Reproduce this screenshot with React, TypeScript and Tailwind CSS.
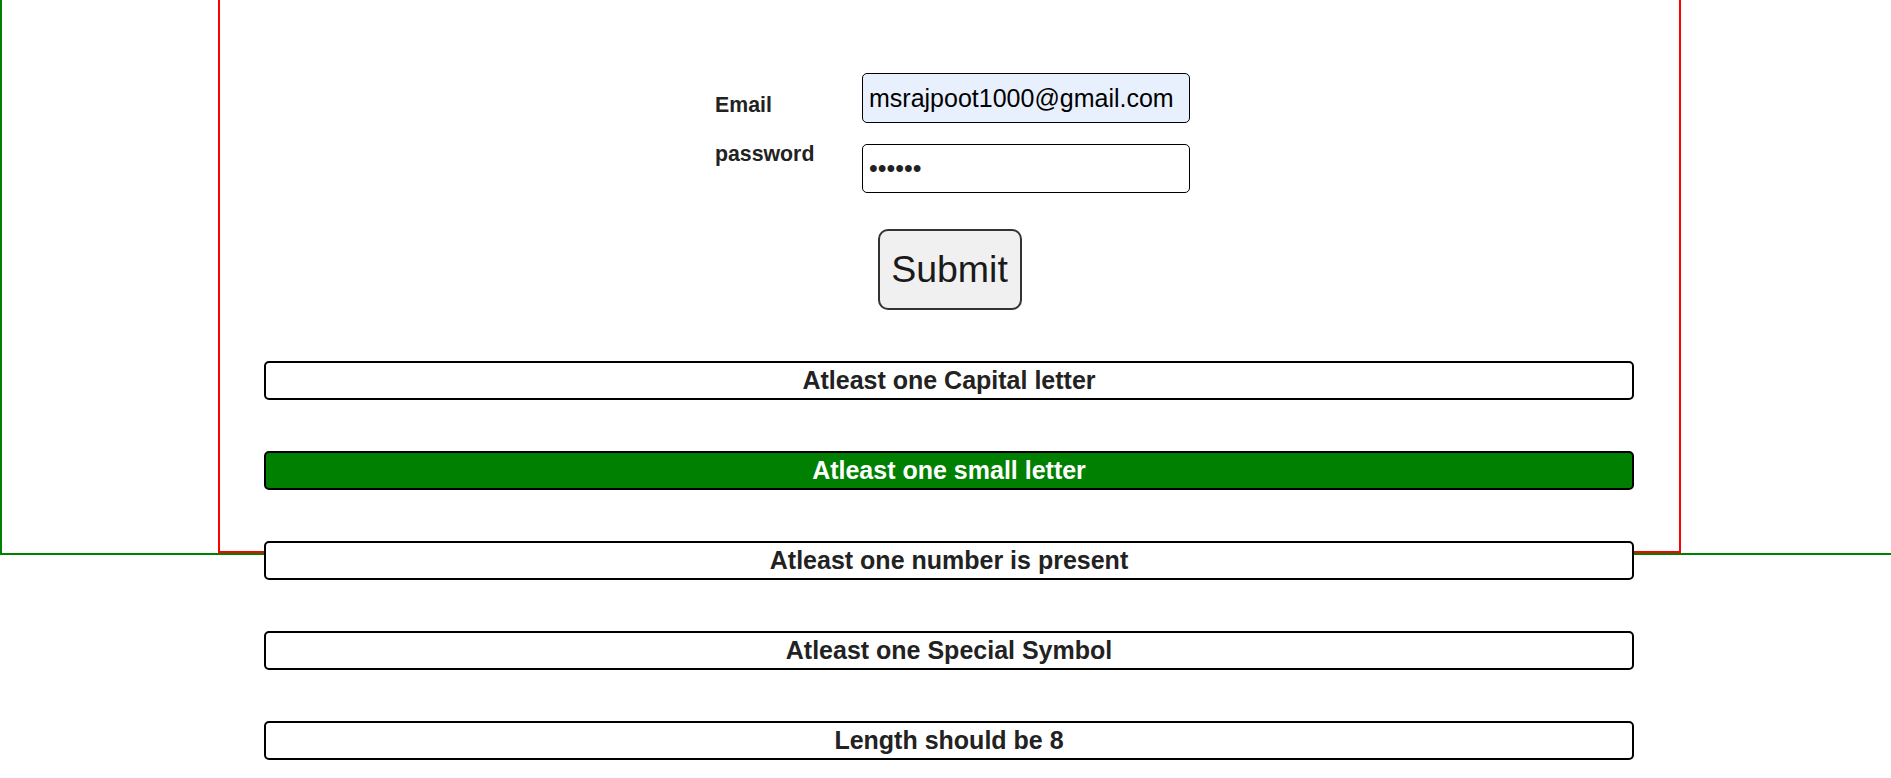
import React from "react";

const rules = [
  { text: "Atleast one Capital letter", ok: false },
  { text: "Atleast one small letter", ok: true },
  { text: "Atleast one number is present", ok: false },
  { text: "Atleast one Special Symbol", ok: false },
  { text: "Length should be 8", ok: false },
];

export default function App() {
  return (
    <div className="w-full h-[778px] overflow-hidden bg-white font-['Liberation_Sans',Arial,sans-serif] text-[#222]">
      <div className="h-[555px] border-l-2 border-b-2 border-[#008000]">
        <div className="ml-[216px] w-[1463px] h-[553px] border-x-2 border-b-2 border-[#ff0000] flex flex-col">
          <div className="flex flex-row mt-[73px] ml-[495px]">
            <div className="w-[147px] flex flex-col gap-[25px] pt-[20px]">
              <label className="text-[21.3px] font-bold leading-[24px]">Email</label>
              <label className="text-[21.3px] font-bold leading-[24px]">password</label>
            </div>
            <div className="flex flex-col gap-[21px]">
              <input
                type="text"
                readOnly
                defaultValue="msrajpoot1000@gmail.com"
                className="w-[328px] h-[50px] bg-[#e8f0fe] border border-black rounded-[5px] pl-[6px] text-[25px] text-black outline-none font-['Liberation_Sans',Arial,sans-serif]"
              />
              <input
                type="password"
                readOnly
                defaultValue="abcdef"
                className="w-[328px] h-[49px] bg-white border border-black rounded-[5px] pl-[6px] text-[25px] text-[#222] outline-none font-['Liberation_Sans',Arial,sans-serif]"
              />
            </div>
          </div>
          <div className="flex justify-center mt-[36px]">
            <button className="w-[144px] h-[81px] bg-[#f0f0f0] border-2 border-[#333] rounded-[10px] text-[37.5px] text-[#1a1a1a] font-['Liberation_Sans',Arial,sans-serif]">
              Submit
            </button>
          </div>
          <div className="flex flex-col gap-[51px] mt-[51px] ml-[44px]">
            {rules.map((r) => (
              <div
                key={r.text}
                className={
                  r.ok
                    ? "w-[1370px] h-[39px] border-2 border-black rounded-[5px] bg-[#008000] text-white text-center text-[25px] font-bold leading-[34px] shrink-0"
                    : "w-[1370px] h-[39px] border-2 border-black rounded-[5px] bg-white text-[#222] text-center text-[25px] font-bold leading-[34px] shrink-0"
                }
              >
                {r.text}
              </div>
            ))}
          </div>
        </div>
      </div>
    </div>
  );
}
